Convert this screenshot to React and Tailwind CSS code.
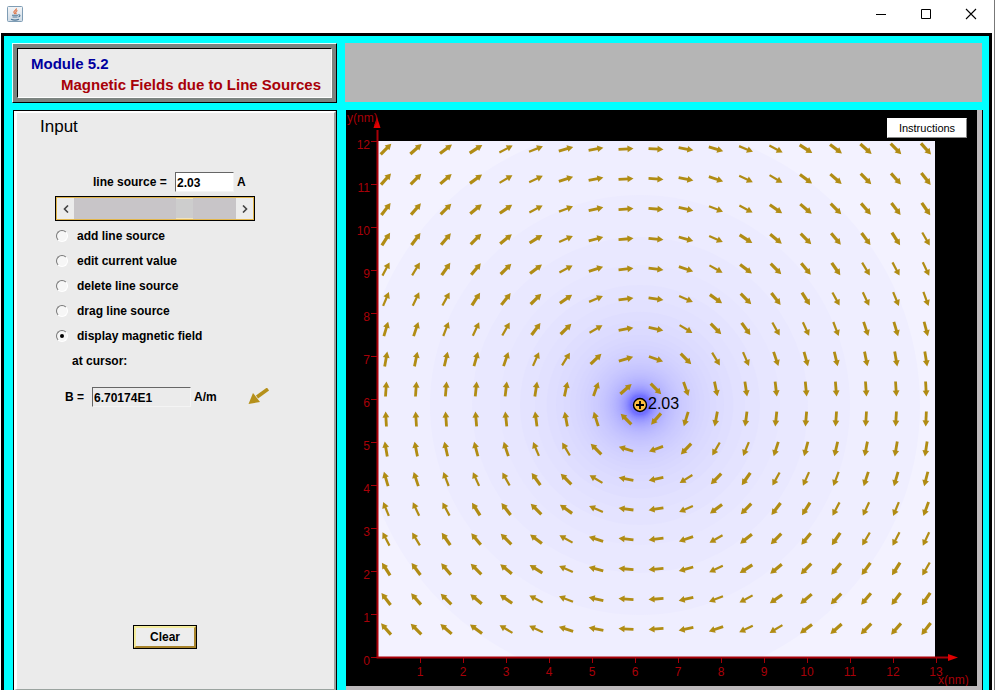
import React, { useState } from 'react';

const SOURCE = { x: 293, y: 295 };
const UNIT = 43;
const PLOT = { left: 31, top: 31, width: 557, height: 516 };

const MODES = [
  { id: 'add', label: 'add line source' },
  { id: 'edit', label: 'edit current value' },
  { id: 'delete', label: 'delete line source' },
  { id: 'drag', label: 'drag line source' },
  { id: 'display', label: 'display magnetic field' },
];

const range = (n) => Array.from({ length: n }, (_, i) => i);

// Field strength falls off as 1/r, drawn as discrete bands
const bands = range(90).map((i) => {
  const level = i + 2;
  const tone = Math.round(254 - 7.2 * level ** 0.66);
  return { r: 840 / level, fill: `rgb(${tone}, ${tone - 1}, 255)` };
});

const arrows = range(17).flatMap((row) =>
  range(19).map((col) => {
    const x = 39 + col * 30;
    const y = 39 + row * 30;
    const angle = (Math.atan2(x - SOURCE.x, SOURCE.y - y) * 180) / Math.PI;
    const folded = Math.abs(angle) % 90;
    const tilt = Math.min(folded, 90 - folded);
    let width = 2.8;
    if (tilt > 20) width = 2.2;
    if (tilt > 32) width = 3.2;
    return { x, y, angle, width };
  })
);

const JavaIcon = () => (
  <svg width="17" height="17" viewBox="0 0 17 17" aria-hidden="true">
    <defs>
      <linearGradient id="java-bg" x1="0" y1="0" x2="0" y2="1">
        <stop offset="0" stopColor="#f4f6f8" />
        <stop offset="1" stopColor="#cfdbe6" />
      </linearGradient>
    </defs>
    <rect x="0.5" y="0.5" width="15" height="15" rx="1" fill="url(#java-bg)" stroke="#7f9db5" />
    <path d="M9.4 2.4c.6 1.6-3 2.4-2.5 4 .2.7.9 1 1 1.7M10.4 4.6c-1 .5-2.3 1.2-1.5 2.2.5.6.2 1-.2 1.4" fill="none" stroke="#dd7040" strokeWidth="1.1" />
    <path d="M5 9.2h6M5.5 11h5M4 13.3c2 .8 6 .8 8 0M11.3 8.8c2.2-.4 2.2 1.7.1 2.2" fill="none" stroke="#4f7797" strokeWidth="1.1" />
  </svg>
);

const TitleBar = () => (
  <header className="flex h-[33px] shrink-0 items-start justify-between bg-white pl-[7px] pt-1.5">
    <JavaIcon />
    <div className="flex gap-[23px] pr-3">
      <button type="button" aria-label="Minimize" className="flex h-4 w-[22px] items-center justify-center">
        <svg width="12" height="12" viewBox="0 0 12 12"><path d="M1 6.5h10" stroke="#000" /></svg>
      </button>
      <button type="button" aria-label="Maximize" className="flex h-4 w-[22px] items-center justify-center">
        <svg width="12" height="12" viewBox="0 0 12 12"><path d="M1.5 1.5h9v9h-9z" fill="none" stroke="#000" /></svg>
      </button>
      <button type="button" aria-label="Close" className="flex h-4 w-[22px] items-center justify-center">
        <svg width="12" height="12" viewBox="0 0 12 12"><path d="M1 1l10 10M11 1L1 11" stroke="#000" strokeWidth="1.1" /></svg>
      </button>
    </div>
  </header>
);

const ModuleHeader = () => (
  <div className="h-[60px] border border-t-[#e0ffff] border-l-[#e0ffff] border-b-black border-r-black">
    <div className="h-full border-4 border-[#7c8480]">
      <div className="h-full border border-t-black border-l-black border-b-white border-r-white bg-[#ebebeb] pl-[13px] pt-1">
        <h1 className="text-[15px] font-bold leading-[21px]">
          <span className="block text-[#00009f]">Module 5.2</span>
          <span className="block whitespace-nowrap pl-[30px] text-[#a80008]">Magnetic Fields due to Line Sources</span>
        </h1>
      </div>
    </div>
  </div>
);

const CurrentSlider = ({ value, onChange }) => {
  const step = (delta) => onChange(Math.max(-5, Math.min(5, value + delta)));

  return (
    <div className="ml-[38px] flex h-[25px] w-[200px] border border-black">
      <div className="flex flex-1 border border-[#e2b64c] bg-[#ececec]">
        <button type="button" aria-label="Decrease" onClick={() => step(-0.01)} className="flex w-[17px] items-center justify-center">
          <svg width="8" height="8" viewBox="0 0 8 8"><path d="M6 0.5L2.5 4L6 7.5" fill="none" stroke="#444" strokeWidth="1.6" /></svg>
        </button>
        <input
          type="range"
          aria-label="line source current"
          min="-5"
          max="5"
          step="0.01"
          value={value}
          onChange={(e) => onChange(Number(e.target.value))}
          className="h-full min-w-0 flex-1 appearance-none bg-[#c8c5c8] [&::-webkit-slider-thumb]:h-[21px] [&::-webkit-slider-thumb]:w-[17px] [&::-webkit-slider-thumb]:appearance-none [&::-webkit-slider-thumb]:border-y [&::-webkit-slider-thumb]:border-[#f0e4c0] [&::-webkit-slider-thumb]:bg-[#cdcdcd]"
        />
        <button type="button" aria-label="Increase" onClick={() => step(0.01)} className="flex w-[17px] items-center justify-center">
          <svg width="8" height="8" viewBox="0 0 8 8"><path d="M2 0.5L5.5 4L2 7.5" fill="none" stroke="#444" strokeWidth="1.6" /></svg>
        </button>
      </div>
    </div>
  );
};

const InputPanel = ({ current, setCurrent, mode, setMode }) => (
  <section className="flex flex-1 border border-b-0 border-black">
    <div className="flex flex-1 flex-col border-l-[3px] border-t-2 border-r-2 border-b border-t-white border-l-white border-r-[#9aa39f] border-b-[#9aa39f] bg-[#ebebeb] text-[12px] font-bold">
      <h2 className="pl-[23px] pt-1 text-[17px] font-normal leading-5">Input</h2>

      <div className="mt-[35px] flex h-5 items-center pl-[76px]">
        <label htmlFor="current" className="w-[82px] whitespace-nowrap">line source =</label>
        <input
          id="current"
          type="text"
          value={current.toFixed(2)}
          onChange={(e) => setCurrent(Number(e.target.value) || 0)}
          className="h-5 w-[59px] border border-t-[#666] border-l-[#666] border-b-[#f4f4f4] border-r-[#f4f4f4] bg-white pl-px pt-0.5"
        />
        <span className="pl-[3px]">A</span>
      </div>

      <div className="mt-1">
        <CurrentSlider value={current} onChange={setCurrent} />
      </div>

      <fieldset className="mt-0.5 pl-[39px]">
        {MODES.map(({ id, label }) => (
          <label key={id} className="flex h-[25px] items-center">
            <input
              type="radio"
              name="mode"
              checked={mode === id}
              onChange={() => setMode(id)}
              className="mr-[9px] flex h-3 w-3 appearance-none items-center justify-center rounded-full border border-t-[#777] border-l-[#777] border-b-white border-r-white bg-[#f6f6f6] checked:before:h-1 checked:before:w-1 checked:before:rounded-full checked:before:bg-black"
            />
            {label}
          </label>
        ))}
        <p className="pl-4 leading-[26px]">at cursor:</p>
      </fieldset>

      <div className="mt-[13px] flex h-5 items-center pl-[48px]">
        <label htmlFor="field" className="w-[27px] whitespace-nowrap">B =</label>
        <input
          id="field"
          type="text"
          readOnly
          value="6.70174E1"
          className="h-5 w-[99px] border border-t-[#666] border-l-[#666] border-b-[#f4f4f4] border-r-[#f4f4f4] bg-[#ebebeb] pl-px pt-0.5"
        />
        <span className="w-[57px] pl-[3px]">A/m</span>
        <svg width="22" height="18" viewBox="0 0 22 18" aria-hidden="true">
          <path d="M20 1L9 9" stroke="#b5901a" strokeWidth="3.600" />
          <path d="M0.500 16L5 5L12 14z" fill="#b5901a" />
        </svg>
      </div>

      <button
        type="button"
        onClick={() => setCurrent(0)}
        className="mb-10 ml-[116px] mt-auto h-6 w-16 border border-black"
      >
        <span className="flex h-full items-center justify-center border-2 border-t-[#f4ec9c] border-l-[#f4ec9c] border-b-[#a8842c] border-r-[#a8842c] bg-[#ededed]">
          Clear
        </span>
      </button>
    </div>
  </section>
);

const FieldPlot = ({ current }) => (
  <svg width="631" height="576" viewBox="-1 0 631 576" role="img" aria-label="Magnetic field" className="block">
    <clipPath id="plot-area">
      <rect x={PLOT.left} y={PLOT.top} width={PLOT.width} height={PLOT.height} />
    </clipPath>
    <g clipPath="url(#plot-area)">
      <rect x={PLOT.left} y={PLOT.top} width={PLOT.width} height={PLOT.height} fill="#f6f4ff" />
      {bands.map(({ r, fill }) => (
        <circle key={r} cx={SOURCE.x} cy={SOURCE.y} r={r} fill={fill} />
      ))}
    </g>

    {arrows.map(({ x, y, angle, width }) => (
      <g key={`${x}-${y}`} transform={`translate(${x} ${y}) rotate(${angle})`}>
        <path d="M-7.500 0H3" stroke="#b08c14" strokeWidth={width} />
        <path d="M7.500 0L1.500 -3.400V3.400z" fill="#b08c14" />
      </g>
    ))}

    {/* Axes */}
    <g stroke="#a80008" fill="#e00000">
      <path d="M30.500 20V547.500H602" fill="none" strokeWidth="2" />
      <path d="M30 7L33.500 18H26.500z" stroke="none" />
      <path d="M611 547.500L601 544V551z" stroke="none" />
      {range(13).map((n) => (
        <path key={n} d={`M24 ${547.5 - n * UNIT}h6`} />
      ))}
      {range(13).map((n) => (
        <path key={n} d={`M${73.5 + n * UNIT} 548v5`} />
      ))}
    </g>
    <g fill="#a80008" fontSize="12">
      {range(13).map((n) => (
        <text key={n} x="23" y={555 - n * UNIT} textAnchor="end">{n}</text>
      ))}
      {range(13).map((n) => (
        <text key={n} x={73 + n * UNIT} y="566" textAnchor="middle">{n + 1}</text>
      ))}
      <text x="0" y="12">y(nm)</text>
      <text x="591" y="574">x(nm)</text>
    </g>

    <circle cx={SOURCE.x} cy={SOURCE.y} r="6.500" fill="#ffc040" stroke="#000" strokeWidth="1.400" />
    <path d={`M${SOURCE.x - 4} ${SOURCE.y}h8M${SOURCE.x} ${SOURCE.y - 4}v8`} stroke="#000" strokeWidth="1.800" />
    <text x="301" y="299" fontSize="16" fill="#000">{current.toFixed(2)}</text>
  </svg>
);

export default function App() {
  const [current, setCurrent] = useState(2.03);
  const [mode, setMode] = useState('display');

  return (
    <div className="flex min-h-screen flex-col border-r border-[#777] bg-white font-['Liberation_Sans',Arial,sans-serif] text-black">
      <TitleBar />
      <main className="ml-px mr-0.5 flex flex-1 gap-2 border-x-[3px] border-t-[3px] border-black bg-[#00ffff] pl-2 pr-1.5 pt-[7px]">
        <div className="flex w-[325px] shrink-0 flex-col gap-[7px]">
          <ModuleHeader />
          <div className="flex flex-1 pl-px">
            <InputPanel current={current} setCurrent={setCurrent} mode={mode} setMode={setMode} />
          </div>
        </div>

        <div className="flex min-w-0 flex-1 flex-col gap-2">
          <div className="mr-px h-[59px] bg-[#b5b5b5]" />
          <div className="ml-px flex-1 border-r border-black bg-[#bdb9bb] pr-[5px]">
            <div className="relative overflow-hidden bg-black">
              <FieldPlot current={current} />
              <button
                type="button"
                className="absolute right-[10px] top-2 h-5 w-20 border border-t-white border-l-white border-b-[#888] border-r-[#888] bg-white text-[11px]"
              >
                Instructions
              </button>
            </div>
          </div>
        </div>
      </main>
    </div>
  );
}
